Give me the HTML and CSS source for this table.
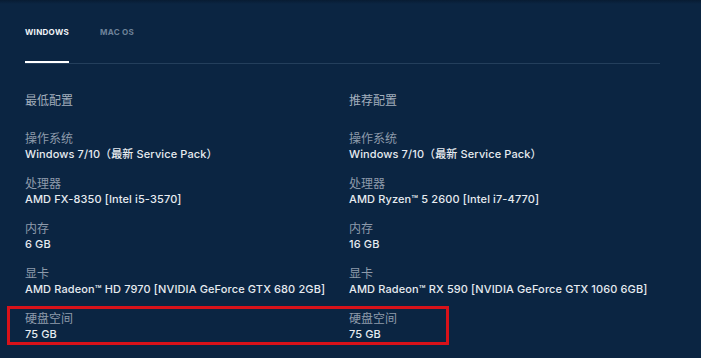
FILE: index.html
```html
<!DOCTYPE html>
<html lang="zh-CN">
<head>
<meta charset="utf-8">
<title>系统需求</title>
<link rel="stylesheet" href="styles.css">
</head>
<body>
  <section class="specs">
    <nav class="tabs">
      <span class="tab tab-active">WINDOWS</span>
      <span class="tab">MAC OS</span>
    </nav>
    <div class="columns">
      <div class="column">
        <h3 class="column-title">最低配置</h3>
        <dl class="spec-list">
          <div class="spec"><dt>操作系统</dt><dd>Windows 7/10（最新 Service Pack）</dd></div>
          <div class="spec"><dt>处理器</dt><dd>AMD FX-8350 [Intel i5-3570]</dd></div>
          <div class="spec"><dt>内存</dt><dd>6 GB</dd></div>
          <div class="spec"><dt>显卡</dt><dd>AMD Radeon™ HD 7970 [NVIDIA GeForce GTX 680 2GB]</dd></div>
          <div class="spec"><dt>硬盘空间</dt><dd>75 GB</dd></div>
        </dl>
      </div>
      <div class="column">
        <h3 class="column-title">推荐配置</h3>
        <dl class="spec-list">
          <div class="spec"><dt>操作系统</dt><dd>Windows 7/10（最新 Service Pack）</dd></div>
          <div class="spec"><dt>处理器</dt><dd>AMD Ryzen™ 5 2600 [Intel i7-4770]</dd></div>
          <div class="spec"><dt>内存</dt><dd>16 GB</dd></div>
          <div class="spec"><dt>显卡</dt><dd>AMD Radeon™ RX 590 [NVIDIA GeForce GTX 1060 6GB]</dd></div>
          <div class="spec"><dt>硬盘空间</dt><dd>75 GB</dd></div>
        </dl>
      </div>
      <div class="highlight"></div>
    </div>
  </section>
</body>
</html>
```

FILE: styles.css
```css
html, body {
  margin: 0;
  height: 100%;
}

body {
  background: linear-gradient(#081c33 0, #0b2542 4px, #0b2542 100%);
  font-family: Inter, "Noto Sans CJK SC", sans-serif;
  color: #e4e9ef;
  overflow: hidden;
}

.specs {
  padding: 26px 41px 0 25px;
}

/* platform tabs */
.tabs {
  display: flex;
  gap: 31px;
  height: 37px;
  border-bottom: 1px solid #243f5c;
}

.tab {
  display: block;
  height: 35px;
  border-bottom: 2px solid transparent;
  font-size: 8px;
  font-weight: 700;
  letter-spacing: 0.3px;
  line-height: 12px;
  color: #6e8299;
}

.tab-active {
  color: #f2f5f8;
  border-bottom-color: #ffffff;
}

/* requirement columns */
.columns {
  position: relative;
  display: grid;
  grid-template-columns: 324px 1fr;
  padding-top: 28px;
}

.column-title {
  margin: 0 0 22px;
  font-size: 12px;
  font-weight: 400;
  line-height: 16px;
  color: #a2aebc;
  font-family: "Noto Sans CJK SC", sans-serif;
}

.spec-list {
  margin: 0;
  display: flex;
  flex-direction: column;
  gap: 13px;
}

.spec dt {
  font-family: "Noto Sans CJK SC", sans-serif;
  font-size: 12px;
  line-height: 16px;
  color: #8e9bab;
}

.spec dd {
  margin: 0;
  font-size: 11px;
  font-weight: 500;
  letter-spacing: 0.12px;
  line-height: 16px;
  color: #e6ebf0;
}

/* marker around the storage row */
.highlight {
  position: absolute;
  left: -18px;
  top: 242px;
  width: 436px;
  height: 33px;
  border: 3px solid #d8121a;
  pointer-events: none;
}
```
